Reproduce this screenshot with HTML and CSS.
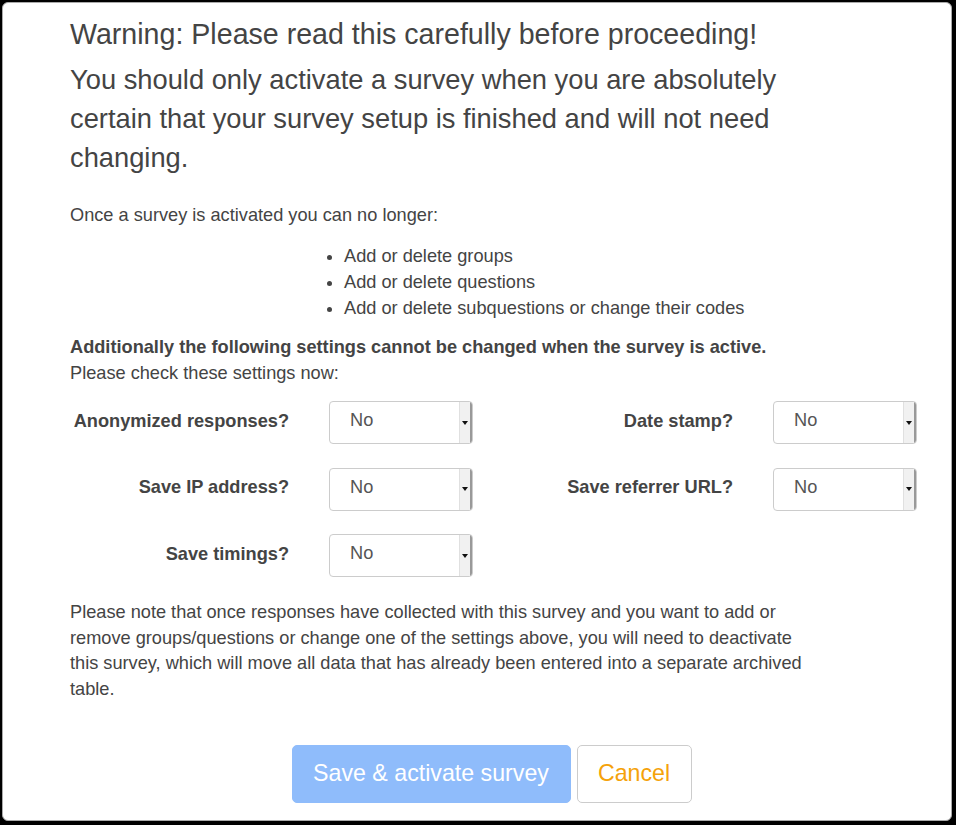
FILE: index.html
```html
<!DOCTYPE html>
<html>
<head>
<meta charset="utf-8">
<link rel="stylesheet" href="styles.css">
</head>
<body>
<div class="modal">
  <div class="intro">
    <h3 class="warn-title">Warning: Please read this carefully before proceeding!</h3>
    <p class="warn-lead">You should only activate a survey when you are absolutely certain that your survey setup is finished and will not need changing.</p>
    <p class="txt once">Once a survey is activated you can no longer:</p>
    <ul class="limits">
      <li>Add or delete groups</li>
      <li>Add or delete questions</li>
      <li>Add or delete subquestions or change their codes</li>
    </ul>
    <p class="txt"><strong>Additionally the following settings cannot be changed when the survey is active.</strong><br>Please check these settings now:</p>
  </div>
  <div class="settings">
    <div class="field"><label class="flabel">Anonymized responses?</label><div class="sel"><span class="sel-val">No</span><span class="sel-arrow"><i></i></span></div></div>
    <div class="field"><label class="flabel">Date stamp?</label><div class="sel"><span class="sel-val">No</span><span class="sel-arrow"><i></i></span></div></div>
    <div class="field"><label class="flabel">Save IP address?</label><div class="sel"><span class="sel-val">No</span><span class="sel-arrow"><i></i></span></div></div>
    <div class="field"><label class="flabel">Save referrer URL?</label><div class="sel"><span class="sel-val">No</span><span class="sel-arrow"><i></i></span></div></div>
    <div class="field"><label class="flabel">Save timings?</label><div class="sel"><span class="sel-val">No</span><span class="sel-arrow"><i></i></span></div></div>
  </div>
  <p class="txt note">Please note that once responses have collected with this survey and you want to add or remove groups/questions or change one of the settings above, you will need to deactivate this survey, which will move all data that has already been entered into a separate archived table.</p>
  <div class="actions">
    <button class="btn btn-primary">Save &amp; activate survey</button>
    <button class="btn btn-cancel">Cancel</button>
  </div>
</div>
</body>
</html>
```

FILE: styles.css
```css
html, body {
  margin: 0;
  padding: 0;
  background: #000;
  height: 100%;
}
body {
  padding: 2px;
  box-sizing: border-box;
  font-family: "Liberation Sans", Arial, sans-serif;
  color: #444;
}
.modal {
  background: #fff;
  border: 1px solid #aaa;
  border-radius: 6px;
  width: 950px;
  height: 819px;
  box-sizing: border-box;
  padding: 14px 0 0 0;
  overflow: hidden;
}
.txt {
  font-size: 18.2px;
  line-height: 26px;
  margin: 0;
}
.intro, .note {
  margin-left: 67px;
  width: 745px;
}
.warn-title {
  font-size: 28.6px;
  font-weight: normal;
  margin: 0;
  line-height: 34px;
}
.warn-lead {
  font-size: 27.3px;
  line-height: 39px;
  margin: 9px 0 0 0;
}
.once {
  margin-top: 25px;
}
.limits {
  margin: 15px 0 13px 0;
  padding-left: 274px;
  font-size: 18.2px;
  line-height: 26px;
}
.settings {
  display: grid;
  grid-template-columns: 444px 444px;
  row-gap: 23.5px;
  margin: 15px 0 0 27px;
}
.field {
  display: flex;
  align-items: center;
}
.flabel {
  width: 259px;
  text-align: right;
  font-weight: bold;
  font-size: 18.2px;
  margin-right: 40px;
  margin-top: -3px;
}
.sel {
  width: 144px;
  height: 43px;
  box-sizing: border-box;
  border: 1px solid #ccc;
  border-radius: 4px;
  display: flex;
  align-items: center;
  overflow: hidden;
}
.sel-val {
  flex: 1;
  padding-left: 20px;
  font-size: 18.2px;
  color: #555;
  margin-top: -4px;
}
.sel-arrow {
  width: 10px;
  height: 100%;
  background: #f1f1f1;
  border-left: 1px solid #e0e0e0;
  border-right: 2px solid #999;
  display: flex;
  align-items: center;
  justify-content: center;
}
.sel-arrow i {
  width: 0;
  height: 0;
  border-left: 3px solid transparent;
  border-right: 3px solid transparent;
  border-top: 4px solid #111;
}
.note {
  margin-top: 23px;
  line-height: 25.7px;
}
.actions {
  display: flex;
  justify-content: center;
  gap: 6px;
  margin-top: 42px;
  padding-left: 29px;
}
.btn {
  font-family: "Liberation Sans", Arial, sans-serif;
  font-size: 23.2px;
  height: 58px;
  border-radius: 5px;
  padding: 0;
  cursor: pointer;
}
.btn-primary {
  background: #8fbcfb;
  border: 1px solid #8fbcfb;
  color: #fff;
  width: 279px;
}
.btn-cancel {
  background: #fff;
  border: 1px solid #ccc;
  color: #f5a20a;
  width: 115px;
}
```
